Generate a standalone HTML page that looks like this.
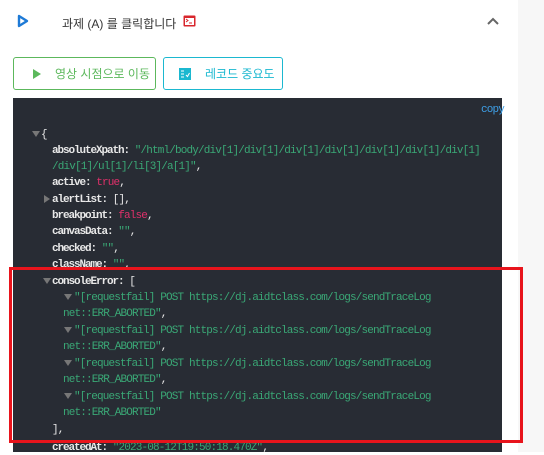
<!DOCTYPE html>
<html><head><meta charset="utf-8"><style>
*{margin:0;padding:0;box-sizing:border-box}
body{width:544px;height:452px;overflow:hidden;background:#fff;font-family:"Liberation Sans","Noto Sans CJK KR",sans-serif;position:relative}
.sb{position:absolute;left:518px;top:0;width:26px;height:452px;background:#f7f7f7}
.hdr{position:absolute;left:62px;top:15px;font-size:12px;color:#333;white-space:nowrap}
.btn{position:absolute;top:57px;height:33px;border:1px solid;border-radius:3px;font-size:12px;display:flex;align-items:center;white-space:nowrap}
.panel{position:absolute;left:13px;top:98px;width:489px;height:354px;background:#282c34}
.ln{position:absolute;font-family:"Liberation Mono",monospace;font-size:11px;letter-spacing:-0.85px;color:#e8e8e8;white-space:pre;line-height:14px}
.k{font-weight:bold;letter-spacing:-1.1px}
.s{color:#3aa876}
.b{color:#e0306a}
.ar{position:absolute;width:0;height:0;border-left:4px solid transparent;border-right:4px solid transparent;border-top:6px solid #777}
.ar2{position:absolute;width:0;height:0;border-top:4px solid transparent;border-bottom:4px solid transparent;border-left:6px solid #777}
.red{position:absolute;left:9px;top:267px;width:514px;height:176px;border:3px solid #e8141c}
</style></head><body>
<div class="sb"></div>
<svg style="position:absolute;left:17px;top:14px" width="12" height="14" viewBox="0 0 12 14"><path d="M2 2 L10 7 L2 12 Z" fill="none" stroke="#1e7ad6" stroke-width="2.4" stroke-linejoin="round"/></svg>
<div class="hdr">과제 (A) 를 클릭합니다</div>
<svg style="position:absolute;left:183px;top:15px" width="13" height="12" viewBox="0 0 13 12"><rect x="0.5" y="0.5" width="12" height="11" rx="1" fill="#d8262c"/><rect x="2" y="3" width="9" height="7" fill="#fff"/><path d="M3 4 L5 5.5 L3 7" stroke="#d8262c" fill="none"/><path d="M6 8 H9" stroke="#d8262c"/></svg>
<svg style="position:absolute;left:487px;top:17px" width="12" height="8" viewBox="0 0 12 8"><path d="M1 7 L6 2 L11 7" fill="none" stroke="#666" stroke-width="2"/></svg>
<div class="btn" style="left:13px;width:143px;border-color:#5cb85c;color:#5cb85c"><svg style="margin-left:18px" width="9" height="10" viewBox="0 0 9 10"><path d="M1 0 L9 5 L1 10Z" fill="#5cb85c"/></svg><span style="margin-left:14px">영상 시점으로 이동</span></div>
<div class="btn" style="left:163px;width:120px;border-color:#1bb8d0;color:#1bb8d0"><svg style="margin-left:15px" width="12" height="12" viewBox="0 0 12 12"><rect width="12" height="12" fill="#1bb8d0"/><path d="M2 3H5M2 6H5M2 9H5M7 7L8.5 8.5 10.5 5" stroke="#fff" fill="none"/></svg><span style="margin-left:14px">레코드 중요도</span></div>
<div class="panel"></div>
<div class="ln" style="left:481px;top:103px;color:#3ea0e8">copy</div>
<div class="ar" style="left:32px;top:131px"></div>
<div class="ln" style="left:41px;top:128px">{</div>
<div class="ln" style="left:52px;top:144px"><span class="k">absoluteXpath:</span> <span class="s">"/html/body/div[1]/div[1]/div[1]/div[1]/div[1]/div[1]/div[1]</span></div>
<div class="ln" style="left:52px;top:160px"><span class="s">/div[1]/ul[1]/li[3]/a[1]"</span>,</div>
<div class="ln" style="left:52px;top:176px"><span class="k">active:</span> <span class="b">true</span>,</div>
<div class="ar2" style="left:44px;top:195px"></div>
<div class="ln" style="left:52px;top:193px"><span class="k">alertList:</span> [],</div>
<div class="ln" style="left:52px;top:209px"><span class="k">breakpoint:</span> <span class="b">false</span>,</div>
<div class="ln" style="left:52px;top:225px"><span class="k">canvasData:</span> <span class="s">""</span>,</div>
<div class="ln" style="left:52px;top:242px"><span class="k">checked:</span> <span class="s">""</span>,</div>
<div class="ln" style="left:52px;top:258px"><span class="k">className:</span> <span class="s">""</span>,</div>
<div class="ar" style="left:43px;top:278px"></div>
<div class="ln" style="left:52px;top:275px"><span class="k">consoleError:</span> [</div>
<div class="ar" style="left:64px;top:294px"></div>
<div class="ln" style="left:74px;top:291px"><span class="s">"[requestfail] POST https://dj.aidtclass.com/logs/sendTraceLog</span></div>
<div class="ln" style="left:63px;top:307px"><span class="s">net::ERR_ABORTED"</span>,</div>
<div class="ar" style="left:64px;top:327px"></div>
<div class="ln" style="left:74px;top:324px"><span class="s">"[requestfail] POST https://dj.aidtclass.com/logs/sendTraceLog</span></div>
<div class="ln" style="left:63px;top:340px"><span class="s">net::ERR_ABORTED"</span>,</div>
<div class="ar" style="left:64px;top:360px"></div>
<div class="ln" style="left:74px;top:357px"><span class="s">"[requestfail] POST https://dj.aidtclass.com/logs/sendTraceLog</span></div>
<div class="ln" style="left:63px;top:373px"><span class="s">net::ERR_ABORTED"</span>,</div>
<div class="ar" style="left:64px;top:393px"></div>
<div class="ln" style="left:74px;top:390px"><span class="s">"[requestfail] POST https://dj.aidtclass.com/logs/sendTraceLog</span></div>
<div class="ln" style="left:63px;top:406px"><span class="s">net::ERR_ABORTED"</span></div>
<div class="ln" style="left:52px;top:423px">],</div>
<div class="ln" style="left:52px;top:441px"><span class="k">createdAt:</span> <span class="s">"2023-08-12T19:50:18.470Z"</span>,</div>
<div class="red"></div>
</body></html>
